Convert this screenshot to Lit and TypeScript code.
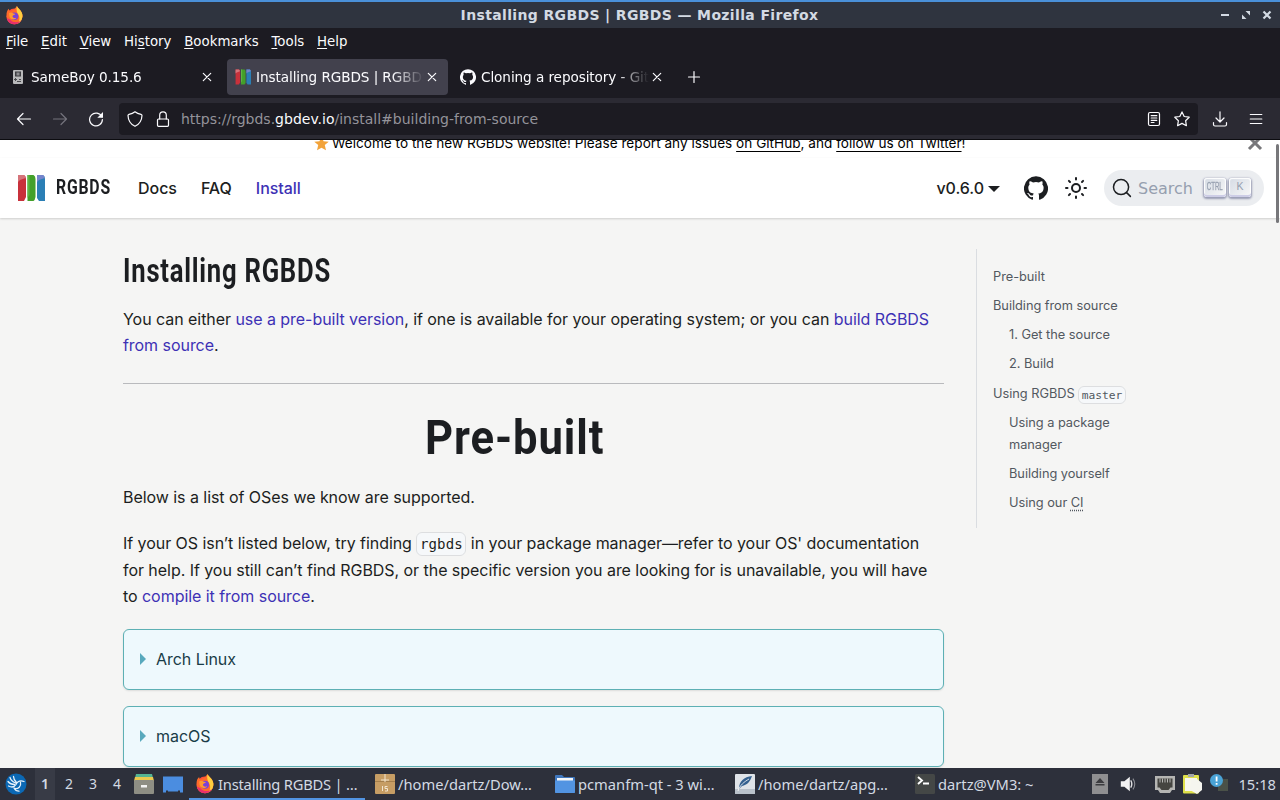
import { LitElement, html, css, svg } from 'lit';
import { customElement, property } from 'lit/decorators.js';

const octocat = svg`<path d="M12 .3a12 12 0 0 0-3.8 23.4c.6.1.8-.3.8-.6v-2c-3.3.7-4-1.6-4-1.6-.6-1.4-1.4-1.8-1.4-1.8-1-.7.1-.7.1-.7 1.2 0 1.9 1.2 1.9 1.2 1 1.8 2.8 1.3 3.5 1 0-.8.4-1.3.7-1.6-2.7-.3-5.5-1.3-5.5-6 0-1.2.5-2.3 1.3-3.1-.2-.4-.6-1.6 0-3.2 0 0 1-.3 3.4 1.2a11.5 11.5 0 0 1 6 0c2.3-1.5 3.3-1.2 3.3-1.2.6 1.6.2 2.8 0 3.2.9.8 1.3 1.9 1.3 3.2 0 4.6-2.8 5.6-5.5 5.9.5.4.9 1 .9 2.2v3.3c0 .3.1.7.8.6A12 12 0 0 0 12 .3"/>`;

const logo = svg`
  <path d="M1 1h6q2 1 2 4v18l-2 4H1z" fill="#c8313b"/>
  <path d="M1 1h6q1.500 1 1.700 3L3 6l-2 2z" fill="#d5747a"/>
  <path d="M10.500 1h6q2 1 2 4v18q-.5 3-2 4h-6z" fill="#43a02a"/>
  <path d="M10.500 1h2v20l-2 3z" fill="#5cb545"/>
  <path d="M20 1h6q2 1 2 4v22h-6l-2-3z" fill="#2b7fb5"/>
  <path d="M20 1h6q1.500 1 1.700 3L22 6l-2 2z" fill="#7584cb"/>`;

const firefox = svg`
  <circle cx="12" cy="13" r="10" fill="#ff4f3a"/>
  <path d="M2 13C1.500 8 3 5 5 3.500c0 1.500.5 2.500 1.500 3L12 4l3-4c1 3 6 5 7 11 .5 7-4 12-10 12S2 19 2 13" fill="#ff6a2b"/>
  <path d="M15 0c1 3 6 5 7 11 .4 5-2 9-5.500 11 2-4 2.500-8 .5-11-2-2-3-6-2-11" fill="#ffcf3f"/>
  <path d="M2.200 15c1 5 5 8 9.800 8 4 0 7-2 8.500-5-3 3-10 4-14-1z" fill="#e8306d"/>
  <circle cx="12" cy="13" r="4.800" fill="#7a41d8"/>
  <path d="M5 9c2-1.500 4-1 5 0 1 .5 2.500.5 3 1-1 1.500-3 1-3.500 3 0 2 3 3 5 1.500C13.500 18 7 18 5.500 13z" fill="#ff9a2e"/>`;

@customElement('px-icon')
export class PxIcon extends LitElement {
  @property() name = '';
  @property({ type: Number }) size = 16;

  static override styles = css`
    :host {
      display: inline-flex;
      flex: none;
    }

    svg {
      display: block;
    }

    .line {
      fill: none;
      stroke: currentColor;
      stroke-width: 1.2;
      stroke-linecap: round;
      stroke-linejoin: round;
    }
  `;

  private _line(body: unknown) {
    return svg`<g class="line">${body}</g>`;
  }

  private _icon() {
    switch (this.name) {
      case 'firefox':
        return { box: 24, body: firefox };
      case 'github':
        return { box: 24, body: svg`<g fill="currentColor">${octocat}</g>` };
      case 'logo':
        return { box: 28, body: logo };
      case 'gameboy':
        return {
          box: 16,
          body: svg`
            <rect x="3" y="1" width="10" height="14" rx="1" fill="#b9b9bb"/>
            <rect x="5" y="2.500" width="6" height="5" fill="#3c3c40"/>
            <path d="M6.500 3.500h3v3h-3z" fill="#8c8c90"/>
            <path d="M5 9h1v1h1v1H6v1H5v-1H4v-1h1zM9 10h2v1H9zM7 12h4v1H7z" fill="#4a4a4e"/>`,
        };
      case 'close':
        return { box: 16, body: this._line(svg`<path d="M4.300 4.300l7.400 7.400M11.700 4.300l-7.400 7.400"/>`) };
      case 'plus':
        return { box: 16, body: this._line(svg`<path d="M8 2.500v11M2.500 8h11"/>`) };
      case 'back':
        return { box: 16, body: this._line(svg`<path d="M14.500 8h-13M7 2.500L1.500 8L7 13.500"/>`) };
      case 'forward':
        return { box: 16, body: this._line(svg`<path d="M1.500 8h13M9 2.500L14.500 8L9 13.500"/>`) };
      case 'reload':
        return {
          box: 16,
          body: svg`${this._line(svg`<path d="M13.800 5.800A6.400 6.400 0 1 0 14.400 8.500"/>`)}
            <path d="M15 1v5.700H9.300z" fill="currentColor"/>`,
        };
      case 'shield':
        return {
          box: 16,
          body: this._line(svg`<path d="M8 .8C6.500 2 4.500 2.900 2 3.300 1.300 3.500 1 4 1 4.500 1.200 9.500 3 13 8 15.300 13 13 14.800 9.500 15 4.500 15 4 14.700 3.500 14 3.300 11.500 2.900 9.500 2 8 .8z"/>`),
        };
      case 'lock':
        return {
          box: 16,
          body: this._line(svg`<rect x="2.500" y="8" width="11" height="7.300" rx="1"/><path d="M4.700 8V4.200a3.300 3.300 0 0 1 6.600 0V8"/>`),
        };
      case 'reader':
        return {
          box: 16,
          body: this._line(svg`<rect x="2.500" y="1.500" width="11" height="13" rx="1.500"/><path d="M5.200 4.700h5.600M5.200 7h5.600M5.200 9.300h5.600M5.200 11.500h2.800"/>`),
        };
      case 'star':
        return {
          box: 16,
          body: this._line(svg`<path d="M8 .9l2.200 4.600 5 .7-3.600 3.500.8 5L8 12.400l-4.400 2.300.8-5L.8 6.200l5-.7z"/>`),
        };
      case 'download':
        return {
          box: 16,
          body: this._line(svg`<path d="M8 .8v10M4 7l4 4 4-4M1.500 11.500v2q0 1.500 1.500 1.500h10q1.500 0 1.500-1.500v-2"/>`),
        };
      case 'menu':
        return { box: 16, body: this._line(svg`<path d="M2.300 3.500h11.500M2.300 8h11.500M2.300 12.500h11.500"/>`) };
      case 'minimize':
        return { box: 16, body: svg`<path d="M4 7h8v2H4z" fill="currentColor"/>` };
      case 'restore':
        return { box: 16, body: svg`<path d="M7.500 4H12v4.500zM4 7.500V12h4.500z" fill="currentColor"/>` };
      case 'quit':
        return { box: 16, body: svg`<path d="M4.500 4.500l7 7m0-7l-7 7" stroke="currentColor" stroke-width="2.200"/>` };
      case 'favourite':
        return {
          box: 16,
          body: svg`<path d="M8 .5l2.200 5 5.500.5-4.200 3.700 1.300 5.600L8 12.400l-4.800 2.900 1.300-5.600L.3 6l5.500-.5z" fill="#f2a33a"/>`,
        };
      case 'dismiss':
        return { box: 16, body: svg`<path d="M2 2l12 12M14 2L2 14" stroke="#77777a" stroke-width="3"/>` };
      case 'sun':
        return {
          box: 24,
          body: svg`<g fill="none" stroke="currentColor" stroke-width="2" stroke-linecap="round">
            <circle cx="12" cy="12" r="4"/>
            <path d="M12 2v1.500M12 20.500V22M2 12h1.500M20.500 12H22M4.900 4.900l1.100 1.100M18 18l1.100 1.100M4.900 19.100L6 18M18 6l1.100-1.100"/></g>`,
        };
      case 'search':
        return {
          box: 20,
          body: svg`<path d="M14.400 14.400L18.400 18.400M14.400 14.400a7.500 7.500 0 1 0-10.700-10.700 7.500 7.500 0 0 0 10.700 10.700" fill="none" stroke="currentColor" stroke-width="1.500" stroke-linecap="round"/>`,
        };
      case 'lubuntu':
        return {
          box: 22,
          body: svg`<circle cx="11" cy="11" r="10.500" fill="#0b68b4"/>
            <path d="M5 4.500c1 3 3 4.500 5.500 5.500M8.500 3.500c0 3 1.500 4.500 3 6M3 8.500c2 2.500 4 3 6.500 3M3.500 13c3 1.500 6 1 7.500-1.500C12.500 8.500 15.500 7 19 8.500M15.500 9.500c1 4-2.500 6.500-5.500 6M9 15c1 2 3 3.200 5 3.200" fill="none" stroke="#e6f1fa" stroke-width="1.300" stroke-linecap="round"/>`,
        };
      case 'files':
        return {
          box: 20,
          body: svg`<path d="M2 0h16l1 4H1z" fill="#55b492"/><path d="M1 3h18l1 4H0z" fill="#ecc84e"/>
            <rect y="6" width="20" height="14" rx="1" fill="#8e8e84"/><rect x="7" y="11" width="6" height="2.500" fill="#f3f3f3"/>`,
        };
      case 'desktop':
        return { box: 20, body: svg`<path d="M0 2.500h20v16h-3v-2h-2v1H5v-1H3v2H0z" fill="#4b8de0"/>` };
      case 'archive':
        return {
          box: 20,
          body: svg`<rect width="20" height="20" rx="1" fill="#c69d64"/><path d="M0 7.500h20" stroke="#a47f4c"/>
            <path d="M10 0v8M6 6h8" stroke="#f2e5cf" stroke-width="1"/>
            <path d="M7.500 12v5M12.500 12.500H10v2h2.500v2.500H10" fill="none" stroke="#f2e5cf" stroke-width="1"/>`,
        };
      case 'folder':
        return {
          box: 20,
          body: svg`<path d="M0 2q0-1 1-1h6l2 2h10q1 0 1 1v14q0 1-1 1H1q-1 0-1-1z" fill="#4077bd"/>
            <path d="M2 4h16v4H2z" fill="#f4f6f8"/><path d="M0 6.500h20V18q0 1-1 1H1q-1 0-1-1z" fill="#5294e2"/>`,
        };
      case 'feather':
        return {
          box: 20,
          body: svg`<rect width="20" height="20" rx="1" fill="#dfe3e8"/><path d="M0 15h20v4q0 1-1 1H1q-1 0-1-1z" fill="#b9c1ca"/>
            <path d="M4 15C4 7 9 3 17 2c-2 6-5 9-10 10z" fill="#34608f"/><path d="M3 17c2-6 6-9 11-12" stroke="#fff" fill="none" stroke-width=".8"/>`,
        };
      case 'terminal':
        return {
          box: 20,
          body: svg`<rect width="20" height="20" rx="1.500" fill="#444746"/>
            <path d="M3 3l4 3.500L3 10M8 9.500h6" fill="none" stroke="#fff" stroke-width="1.900"/>`,
        };
      case 'eject':
        return {
          box: 20,
          body: svg`<path d="M2 0h16v20H2z" fill="#8f8f91"/><path d="M5.500 9L10 4l4.500 5zM5.500 10h9v1.500h-9z" fill="#3b3b3f"/>`,
        };
      case 'volume':
        return {
          box: 20,
          body: svg`<path d="M2 7h4l6-5v16l-6-5H2z" fill="#f1f1f2"/>
            <path d="M13 6q2.500 4 0 8" fill="none" stroke="#e1e1e3" stroke-width="1.500"/>
            <path d="M15.500 4q4 6 0 12" fill="none" stroke="#8c8e94" stroke-width="1.200"/>`,
        };
      case 'network':
        return {
          box: 20,
          body: svg`<path d="M0 2h20v14h-3l-2 3H5l-2-3H0z" fill="#b5b5b3"/><path d="M2.500 4.500h15v9h-2l-2 2.500h-7l-2-2.500h-2z" fill="#454541"/>
            <path d="M5 4.500v4M7.500 4.500v4M10 4.500v4M12.500 4.500v4M15 4.500v4" stroke="#b5b5b3"/>`,
        };
      case 'clipboard':
        return {
          box: 20,
          body: svg`<rect x="1" y="1" width="16" height="18.500" rx="1" fill="#dfe04b"/><path d="M3 4h12v13H3z" fill="#f7f7ee"/>
            <path d="M6 0h6v3H6z" fill="#a2a5a7"/><path d="M9 6l6-1 5 4v7l-5 4-7-4z" fill="#f5f5ef"/>`,
        };
      default:
        return {
          box: 20,
          body: svg`<path d="M9 5h10v12H9z" fill="#4a5148"/><circle cx="7.500" cy="6.500" r="6.500" fill="#4aa3d6"/>
            <path d="M6.700 2.500h1.800v5H6.700zM6.700 9h1.800v1.800H6.700z" fill="#fff"/>`,
        };
    }
  }

  override render() {
    const { box, body } = this._icon();
    return html`<svg width=${this.size} height=${this.size} viewBox="0 0 ${box} ${box}">${body}</svg>`;
  }
}

@customElement('browser-chrome')
export class BrowserChrome extends LitElement {
  static override styles = css`
    :host {
      display: block;
      height: 140px;
      color: #fbfbfe;
      background: #1c1b22;
      font-family: 'DejaVu Sans', sans-serif;
      font-size: 13.33px;
      white-space: nowrap;
    }

    .title {
      display: flex;
      align-items: center;
      box-sizing: border-box;
      height: 28px;
      padding: 0 5px;
      border-top: 2px solid #4a90d9;
      background: #2f343f;
      color: #d3dae3;
      font-weight: bold;
      font-size: 14px;
      letter-spacing: 0.36px;
    }

    .title span {
      flex: 1;
      text-align: center;
      padding-left: 38px;
    }

    .window {
      display: flex;
      gap: 5px;
    }

    .menus {
      display: flex;
      gap: 12.75px;
      align-items: center;
      height: 27px;
      padding-left: 6px;
    }

    u {
      text-underline-offset: 2px;
      text-decoration-skip-ink: none;
    }

    .tabs {
      display: flex;
      align-items: center;
      gap: 4px;
      height: 43px;
      padding-left: 2px;
    }

    .tab {
      display: flex;
      align-items: center;
      box-sizing: border-box;
      width: 221px;
      height: 36px;
      padding: 0 8px;
      border-radius: 4px;
    }

    .tab.active {
      background: #42414d;
    }

    .label {
      flex: 1;
      margin-left: 5px;
      font-size: 13.6px;
      letter-spacing: -0.08px;
      overflow: hidden;
      -webkit-mask-image: linear-gradient(to left, transparent, #000 32px);
    }

    .add {
      margin-left: 9px;
    }

    .nav {
      display: flex;
      align-items: center;
      box-sizing: border-box;
      height: 42px;
      padding: 1px 16px 0;
      background: #2b2a33;
      border-bottom: 1px solid #0c0c10;
    }

    .nav > px-icon {
      margin-right: 20px;
    }

    .nav .dim {
      color: #74737c;
    }

    .url {
      display: flex;
      flex: 1;
      align-items: center;
      box-sizing: border-box;
      height: 32px;
      margin: 0 14px 0 -5px;
      padding: 0 8px;
      gap: 12px;
      border-radius: 4px;
      background: #1c1b22;
    }

    .address {
      flex: 1;
      margin-left: -2px;
      color: #94939a;
      font-size: 14px;
    }

    .address b {
      color: #fbfbfe;
      font-weight: normal;
    }

    .nav > px-icon:last-child {
      margin-right: 0;
    }
  `;

  private _tabs = [
    { icon: 'gameboy', label: 'SameBoy 0.15.6' },
    { icon: 'logo', label: 'Installing RGBDS | RGBDS', active: true },
    { icon: 'github', label: 'Cloning a repository - GitHub' },
  ];

  override render() {
    return html`
      <div class="title">
        <px-icon name="firefox" size="19"></px-icon>
        <span>Installing RGBDS | RGBDS — Mozilla Firefox</span>
        <div class="window">
          <px-icon name="minimize"></px-icon>
          <px-icon name="restore"></px-icon>
          <px-icon name="quit"></px-icon>
        </div>
      </div>
      <div class="menus">
        <span><u>F</u>ile</span><span><u>E</u>dit</span><span><u>V</u>iew</span><span>Hi<u>s</u>tory</span>
        <span><u>B</u>ookmarks</span><span><u>T</u>ools</span><span><u>H</u>elp</span>
      </div>
      <div class="tabs">
        ${this._tabs.map(
          (t) => html`
            <div class="tab ${t.active ? 'active' : ''}">
              <px-icon name=${t.icon}></px-icon>
              <span class="label">${t.label}</span>
              <px-icon name="close"></px-icon>
            </div>
          `
        )}
        <px-icon class="add" name="plus"></px-icon>
      </div>
      <div class="nav">
        <px-icon name="back"></px-icon>
        <px-icon name="forward" class="dim"></px-icon>
        <px-icon name="reload"></px-icon>
        <div class="url">
          <px-icon name="shield"></px-icon>
          <px-icon name="lock"></px-icon>
          <span class="address">https://rgbds.<b>gbdev.io</b>/install#building-from-source</span>
          <px-icon name="reader"></px-icon>
          <px-icon name="star"></px-icon>
        </div>
        <px-icon name="download"></px-icon>
        <px-icon name="menu"></px-icon>
      </div>
    `;
  }
}

@customElement('docs-page')
export class DocsPage extends LitElement {
  static override styles = css`
    :host {
      display: block;
      position: relative;
      flex: 1;
      min-height: 0;
      overflow: hidden;
      background: #f5f5f4;
      color: #1c1e21;
      font: 16px/26.4px Inter, sans-serif;
    }

    .scrollbar {
      position: absolute;
      top: 4px;
      right: 1px;
      width: 3px;
      height: 79px;
      border-radius: 2px;
      background: #77777a;
    }

    .announce {
      display: flex;
      align-items: center;
      height: 30px;
      margin-top: -12px;
      padding: 0 17px 0 314px;
      background: #fff;
      color: #000;
      font-size: 13.6px;
      white-space: nowrap;
    }

    .announce span {
      flex: 1;
      margin-left: 3px;
      letter-spacing: 0.012px;
    }

    .announce u {
      text-underline-offset: 3px;
      text-decoration-skip-ink: none;
    }

    header {
      display: flex;
      align-items: center;
      box-sizing: border-box;
      height: 60px;
      padding: 0 16px 0 17px;
      background: #fff;
      box-shadow: 0 1px 2px rgba(0, 0, 0, 0.16);
      font-weight: 500;
    }

    .brand {
      width: 71px;
      margin-left: 11px;
    }

    .narrow {
      display: inline-block;
      font-family: Roboto, sans-serif;
      font-weight: bold;
      white-space: nowrap;
    }

    .brand .narrow {
      font-size: 20px;
      letter-spacing: 1px;
      transform: scaleX(0.79);
      transform-origin: left;
    }

    nav {
      display: flex;
      flex: 1;
      gap: 24px;
      margin-left: 11px;
      letter-spacing: -0.04px;
    }

    a {
      color: #3d31b5;
    }

    .version {
      display: flex;
      align-items: center;
      gap: 4px;
      margin-right: 24px;
      letter-spacing: -0.05px;
    }

    .caret {
      margin-top: 2px;
      border: 6px solid transparent;
      border-top-color: currentColor;
      border-bottom: 0;
    }

    .sun {
      margin: 0 16px;
    }

    .search {
      display: flex;
      align-items: center;
      box-sizing: border-box;
      width: 160px;
      height: 36px;
      padding: 0 13px 0 8px;
      border-radius: 18px;
      background: #ebedf0;
    }

    .search span {
      flex: 1;
      margin-left: 6px;
      color: #969faf;
      font: 16px 'DejaVu Sans', sans-serif;
    }

    kbd {
      box-sizing: border-box;
      width: 22px;
      height: 19px;
      margin: -2px 0 0 3px;
      border-radius: 3px;
      background: linear-gradient(-225deg, #d5dbe4, #f8f8f8);
      box-shadow: inset 0 -2px #cdcde6, inset 0 0 1px 1px #fff, 0 1px 2px 1px rgba(30, 35, 90, 0.4);
      color: #969faf;
      font: 10.500px/17px 'Liberation Sans', sans-serif;
      text-align: center;
    }

    kbd i {
      display: inline-block;
      margin: 0 -8px;
      font-style: normal;
      transform: scaleX(0.58);
      -webkit-text-stroke: 0.3px;
    }

    .body {
      display: flex;
      align-items: flex-start;
      gap: 32px;
      padding: 31px 0 0 123px;
    }

    main {
      width: 821px;
      letter-spacing: -0.05px;
    }

    h1,
    h2 {
      margin: 0;
      font-weight: bold;
    }

    h1 {
      height: 57px;
      line-height: 43px;
    }

    h1 .narrow {
      font-size: 34px;
      letter-spacing: 1px;
      transform: scaleX(0.754);
      transform-origin: left;
    }

    h2 {
      height: 100px;
      line-height: 107px;
      text-align: center;
    }

    h2 .narrow {
      margin-right: 38px;
      font-size: 49px;
      letter-spacing: 1px;
      transform: scaleX(0.89);
    }

    p {
      margin: 0 0 20px;
    }

    hr {
      height: 1px;
      margin: 24px 0 0;
      border: 0;
      background: #b9babd;
    }

    code {
      padding: 1.6px 2.6px;
      border: 1px solid rgba(0, 0, 0, 0.1);
      border-radius: 6px;
      background: #f6f8fa;
      font-family: 'DejaVu Sans Mono', monospace;
      font-size: 88%;
      line-height: 1;
    }

    p code {
      padding: 3px 2.6px;
      letter-spacing: 0.1px;
    }

    .os {
      display: flex;
      align-items: center;
      box-sizing: border-box;
      height: 60.4px;
      margin-bottom: 16.4px;
      padding: 0 16px 1.4px;
      border: 1px solid #5db0b4;
      border-radius: 6px;
      background: #eef9fd;
      box-shadow: 0 1px 2px rgba(0, 0, 0, 0.1);
      color: #193c47;
    }

    .os::before {
      content: '';
      margin-right: 10px;
      border: 6px solid transparent;
      border-left-color: #58a9bd;
      border-right: 0;
    }

    aside {
      box-sizing: border-box;
      width: 170px;
      height: 279px;
      padding: 17px 0 0 16px;
      border-left: 1px solid #dadde1;
      color: #525860;
      font-size: 12.8px;
      line-height: 21.1px;
      letter-spacing: -0.03px;
    }

    aside div {
      margin-bottom: 8px;
    }

    aside .sub {
      width: 120px;
      padding-left: 16px;
    }

    aside .tall {
      padding-top: 1px;
    }

    abbr {
      text-decoration: underline dotted;
      text-underline-offset: 3px;
    }
  `;

  override render() {
    return html`
      <div class="announce">
        <px-icon name="favourite" size="15"></px-icon>
        <span>Welcome to the new RGBDS website! Please report any issues <u>on GitHub</u>, and <u>follow us on Twitter</u>!</span>
        <px-icon name="dismiss"></px-icon>
      </div>
      <header>
        <px-icon name="logo" size="28"></px-icon>
        <div class="brand"><span class="narrow">RGBDS</span></div>
        <nav><span>Docs</span><span>FAQ</span><a>Install</a></nav>
        <div class="version">v0.6.0 <span class="caret"></span></div>
        <px-icon name="github" size="24"></px-icon>
        <px-icon name="sun" size="24" class="sun"></px-icon>
        <div class="search">
          <px-icon name="search" size="20"></px-icon>
          <span>Search</span>
          <kbd><i>CTRL</i></kbd><kbd>K</kbd>
        </div>
      </header>
      <div class="body">
        <main>
          <h1><span class="narrow">Installing RGBDS</span></h1>
          <p>
            You can either <a>use a pre-built version</a>, if one is available for your operating system; or you can
            <a>build RGBDS from source</a>.
          </p>
          <hr />
          <h2><span class="narrow">Pre-built</span></h2>
          <p>Below is a list of OSes we know are supported.</p>
          <p>
            If your OS isn’t listed below, try finding <code>rgbds</code> in your package manager—refer to your OS'
            documentation for help. If you still can’t find RGBDS, or the specific version you are looking for is
            unavailable, you will have to <a>compile it from source</a>.
          </p>
          <div class="os">Arch Linux</div>
          <div class="os">macOS</div>
        </main>
        <aside>
          <div>Pre-built</div>
          <div>Building from source</div>
          <div class="sub">1. Get the source</div>
          <div class="sub">2. Build</div>
          <div class="tall">Using RGBDS <code>master</code></div>
          <div class="sub">Using a package manager</div>
          <div class="sub">Building yourself</div>
          <div class="sub">Using our <abbr>CI</abbr></div>
        </aside>
      </div>
      <div class="scrollbar"></div>
    `;
  }
}

@customElement('task-bar')
export class TaskBar extends LitElement {
  static override styles = css`
    :host {
      display: flex;
      align-items: center;
      box-sizing: border-box;
      height: 32px;
      padding: 0 4px 0 5px;
      background: #2d303b;
      color: #d3dae3;
      font: 14.7px 'Noto Sans', sans-serif;
      white-space: nowrap;
    }

    .desk {
      width: 24px;
      line-height: 32px;
      text-align: center;
    }

    .desk.on {
      width: 20px;
      margin: 0 2px;
      background: #383b46;
      font-weight: 600;
    }

    .desks {
      display: flex;
      margin: 0 5px 0 6px;
      font-size: 14px;
    }

    .quick {
      margin-right: 9px;
    }

    .tasks {
      display: flex;
      margin-left: 6px;
    }

    .task {
      display: flex;
      align-items: center;
      box-sizing: border-box;
      width: 180px;
      height: 32px;
      padding: 0 0 0 6px;
      gap: 3px;
      border-bottom: 2px solid transparent;
      border-top: 2px solid transparent;
    }

    .task.on {
      width: 176px;
      margin-right: 4px;
      letter-spacing: -0.2px;
      border-bottom-color: #5294e2;
    }

    .tray {
      display: flex;
      flex: 1;
      align-items: center;
      justify-content: flex-end;
      gap: 7px;
    }

    .tray .gap {
      margin-right: 11px;
    }

    .tray .wide {
      margin-right: 2px;
    }
  `;

  private _tasks = [
    { icon: 'firefox', label: 'Installing RGBDS | …', on: true },
    { icon: 'archive', label: '/home/dartz/Dow…' },
    { icon: 'folder', label: 'pcmanfm-qt - 3 wi…' },
    { icon: 'feather', label: '/home/dartz/apg…' },
    { icon: 'terminal', label: 'dartz@VM3: ~' },
  ];

  override render() {
    return html`
      <px-icon name="lubuntu" size="22"></px-icon>
      <div class="desks">
        ${[1, 2, 3, 4].map((n) => html`<span class="desk ${n === 1 ? 'on' : ''}">${n}</span>`)}
      </div>
      <px-icon class="quick" name="files" size="20"></px-icon>
      <px-icon name="desktop" size="20"></px-icon>
      <div class="tasks">
        ${this._tasks.map(
          (t) => html`
            <div class="task ${t.on ? 'on' : ''}">
              <px-icon name=${t.icon} size="20"></px-icon>
              <span>${t.label}</span>
            </div>
          `
        )}
      </div>
      <div class="tray">
        <px-icon name="eject" size="20" class="wide"></px-icon>
        <px-icon name="volume" size="18" class="gap"></px-icon>
        <px-icon name="network" size="20"></px-icon>
        <px-icon name="clipboard" size="20"></px-icon>
        <px-icon name="notice" size="20" class="wide"></px-icon>
        <span>15:18</span>
      </div>
    `;
  }
}

@customElement('app-root')
export class AppRoot extends LitElement {
  static override styles = css`
    :host {
      display: flex;
      flex-direction: column;
      width: 1280px;
      height: 800px;
      overflow: hidden;
    }
  `;

  override render() {
    return html`
      <browser-chrome></browser-chrome>
      <docs-page></docs-page>
      <task-bar></task-bar>
    `;
  }
}
